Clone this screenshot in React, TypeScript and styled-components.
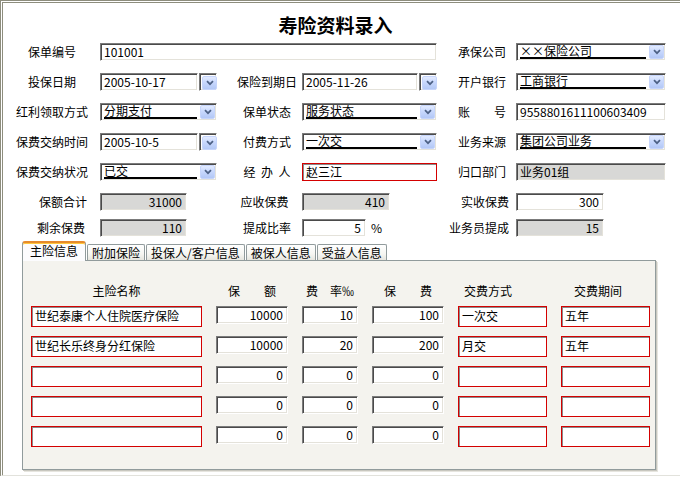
import React from 'react'
import styled, { createGlobalStyle, css } from 'styled-components'

const GlobalStyle = createGlobalStyle`
  html, body {
    margin: 0;
    padding: 0;
    background: #ffffff;
  }
  body {
    font-family: "Noto Sans CJK SC", "Noto Sans", sans-serif;
    font-size: 12px;
    color: #000000;
  }
  * {
    box-sizing: border-box;
  }
`

const sunken = css`
  border-top: 1px solid #7b7b7b;
  border-left: 1px solid #7b7b7b;
  border-bottom: 1px solid #ffffff;
  border-right: 1px solid #ffffff;
  box-shadow: inset 1px 1px 0 #4a4a4a, inset -1px -1px 0 #e4e2da;
`

const Frame = styled.div`
  width: 680px;
  height: 476px;
  border-top: 3px double #8d8d7d;
  border-left: 3px double #8d8d7d;
  border-bottom: 1px solid #e2e2dc;
  background: #ffffff;
  display: flex;
  flex-direction: column;
`

const Title = styled.h1`
  margin: 11px 12px 0 0;
  font-size: 19px;
  line-height: 22px;
  font-weight: 700;
  text-align: center;
`

const FormGrid = styled.div`
  display: grid;
  grid-template-columns: 90px 117px 85px 135px 79px 150px;
  grid-template-rows: 30px 30px 30px 30px 30px 26px 18px;
  align-items: start;
  margin: 7px 0 0 7px;
`

const Label = styled.div<{ $pad?: string; $align?: string; $spaced?: boolean }>`
  height: 18px;
  line-height: 18px;
  white-space: nowrap;
  text-align: ${({ $align }) => $align ?? 'center'};
  padding: ${({ $pad }) => $pad ?? '0'};
  ${({ $spaced }) =>
    $spaced &&
    css`
      letter-spacing: 5.5px;
      text-indent: 5.5px;
    `}
`

type Tone = 'white' | 'gray' | 'red'

const Field = styled.div<{ $w?: number; $tone?: Tone; $right?: boolean; $span?: number; $h?: number }>`
  ${sunken}
  width: ${({ $w }) => ($w ? `${$w}px` : '100%')};
  height: ${({ $h }) => $h ?? 18}px;
  line-height: ${({ $h }) => ($h ?? 18) - 3}px;
  padding: 0 4px 0 3px;
  white-space: nowrap;
  text-align: ${({ $right }) => ($right ? 'right' : 'left')};
  background: ${({ $tone }) => ($tone === 'gray' ? '#d8d8d6' : '#ffffff')};
  grid-column: ${({ $span }) => ($span ? `span ${$span}` : 'auto')};
  ${({ $tone }) =>
    $tone === 'red' &&
    css`
      border: 1px solid #d40000;
      box-shadow: inset 1px 1px 0 #8a8a8a;
    `}
`

const Inline = styled.div`
  display: flex;
  align-items: center;
`

const Unit = styled.span`
  margin-left: 5px;
  line-height: 18px;
`

const DateBox = styled.div`
  display: flex;
  gap: 1px;
  width: 100%;
  & > ${Field} {
    flex: 1;
  }
`

const Well = styled.div`
  ${sunken}
  width: 18px;
  height: 18px;
  padding: 1px 0 0 2px;
  background: #ffffff;
`

const Combo = styled.div`
  ${sunken}
  width: 100%;
  height: 18px;
  background: #ffffff;
  display: flex;
  align-items: flex-start;
  padding: 0 1px 0 3px;
`

const ComboValue = styled.div`
  flex: 1;
  height: 15px;
  line-height: 13px;
  border-bottom: 2px solid #000000;
  margin-right: 3px;
  white-space: nowrap;
`

const DropBtn = styled.span`
  width: 15px;
  height: 14px;
  margin-top: 1px;
  border-radius: 2px;
  border: 1px solid #c6d5fb;
  background: linear-gradient(180deg, #e3ebff 0%, #c8d8fd 45%, #b3c8f6 100%);
  display: flex;
  align-items: center;
  justify-content: center;
  flex: none;
`

const TabArea = styled.div`
  margin: 4px 0 0 19px;
  width: 634px;
`

const TabStrip = styled.div`
  display: flex;
  align-items: flex-end;
  height: 19px;
`

const Tab = styled.div<{ $active?: boolean }>`
  white-space: nowrap;
  border: 1px solid #919b9c;
  border-bottom: none;
  ${({ $active }) =>
    $active
      ? css`
          position: relative;
          z-index: 1;
          height: 20px;
          margin-bottom: -1px;
          padding: 0 7px;
          line-height: 16px;
          background: #fcfcfe;
          border-top: 2px solid #e68b2c;
          box-shadow: inset 0 1px 0 #ffc73c;
          border-radius: 3px 3px 0 0;
        `
      : css`
          height: 16px;
          margin-left: 1px;
          padding: 0 4px;
          line-height: 16px;
          background: linear-gradient(180deg, #ffffff 0%, #f6f6f2 60%, #e6e5de 100%);
          border-radius: 2px 2px 0 0;
        `}
`

const Panel = styled.div`
  height: 210px;
  border: 1px solid #919b9c;
  background: #f4f3ee;
  box-shadow: 1px 1px 0 #c8c7bf, 2px 2px 0 #e6e5df;
  padding: 22px 0 0 8px;
`

const TableGrid = styled.div`
  display: grid;
  grid-template-columns: 171px 72px 56px 72px 89px 89px;
  grid-template-rows: 23px repeat(5, 30px);
  column-gap: 14px;
  align-items: start;
`

const Head = styled.div<{ $padR?: number }>`
  height: 16px;
  line-height: 16px;
  text-align: center;
  white-space: nowrap;
  padding-right: ${({ $padR }) => $padR ?? 0}px;
`

function Chevron() {
  return (
    <svg width="8" height="6" viewBox="0 0 8 6">
      <path d="M1 1.2 L4 4.2 L7 1.2" fill="none" stroke="#4d6185" strokeWidth="1.7" />
    </svg>
  )
}

function Select({ value }: { value: string }) {
  return (
    <Combo>
      <ComboValue>{value}</ComboValue>
      <DropBtn>
        <Chevron />
      </DropBtn>
    </Combo>
  )
}

function DateInput({ value }: { value: string }) {
  return (
    <DateBox>
      <Field>{value}</Field>
      <Well>
        <DropBtn>
          <Chevron />
        </DropBtn>
      </Well>
    </DateBox>
  )
}

const tabs = ['主险信息', '附加保险', '投保人/客户信息', '被保人信息', '受益人信息']

const policies = [
  { name: '世纪泰康个人住院医疗保险', amount: '10000', rate: '10', fee: '100', mode: '一次交', term: '五年' },
  { name: '世纪长乐终身分红保险', amount: '10000', rate: '20', fee: '200', mode: '月交', term: '五年' },
  { name: '', amount: '0', rate: '0', fee: '0', mode: '', term: '' },
  { name: '', amount: '0', rate: '0', fee: '0', mode: '', term: '' },
  { name: '', amount: '0', rate: '0', fee: '0', mode: '', term: '' },
]

export default function App() {
  return (
    <>
      <GlobalStyle />
      <Frame>
        <Title>寿险资料录入</Title>
        <FormGrid>
          <Label $pad="0 6px 0 0">保单编号</Label>
          <Field $span={3}>101001</Field>
          <Label $pad="0 0 0 11px">承保公司</Label>
          <Select value="××保险公司" />

          <Label $pad="0 6px 0 0">投保日期</Label>
          <DateInput value="2005-10-17" />
          <Label $pad="0 0 0 15px">保险到期日</Label>
          <DateInput value="2005-11-26" />
          <Label $pad="0 0 0 11px">开户银行</Label>
          <Select value="工商银行" />

          <Label $pad="0 6px 0 0">红利领取方式</Label>
          <Select value="分期支付" />
          <Label $pad="0 0 0 15px">保单状态</Label>
          <Select value="服务状态" />
          <Label $pad="0 0 0 11px">账　　号</Label>
          <Field>9558801611100603409</Field>

          <Label $pad="0 6px 0 0">保费交纳时间</Label>
          <DateInput value="2005-10-5" />
          <Label $pad="0 0 0 15px">付费方式</Label>
          <Select value="一次交" />
          <Label $pad="0 0 0 11px">业务来源</Label>
          <Select value="集团公司业务" />

          <Label $pad="0 6px 0 0">保费交纳状况</Label>
          <Select value="已交" />
          <Label $pad="0 0 0 15px" $spaced>
            经办人
          </Label>
          <Field $tone="red">赵三江</Field>
          <Label $pad="0 0 0 11px">归口部门</Label>
          <Field $tone="gray">业务01组</Field>

          <Label $pad="0 13px 0 0" $align="right">
            保额合计
          </Label>
          <Field $w={87} $tone="gray" $right>
            31000
          </Field>
          <Label $pad="0 0 0 10px">应收保费</Label>
          <Field $w={88} $tone="gray" $right>
            410
          </Field>
          <Label $pad="0 7px 0 0" $align="right">
            实收保费
          </Label>
          <Field $w={88} $right>
            300
          </Field>

          <Label $pad="0 15px 0 0" $align="right">
            剩余保费
          </Label>
          <Field $w={87} $tone="gray" $right>
            110
          </Field>
          <Label $pad="0 0 0 15px">提成比率</Label>
          <Inline>
            <Field $w={64} $right>
              5
            </Field>
            <Unit>%</Unit>
          </Inline>
          <Label $pad="0 7px 0 0" $align="right">
            业务员提成
          </Label>
          <Field $w={88} $tone="gray" $right>
            15
          </Field>
        </FormGrid>

        <TabArea>
          <TabStrip>
            {tabs.map((t, i) => (
              <Tab key={t} $active={i === 0}>
                {t}
              </Tab>
            ))}
          </TabStrip>
          <Panel>
            <TableGrid>
              <Head>主险名称</Head>
              <Head>保　　额</Head>
              <Head>费　率‰</Head>
              <Head>保　　费</Head>
              <Head $padR={29}>交费方式</Head>
              <Head $padR={15}>交费期间</Head>
              {policies.map((p, i) => (
                <React.Fragment key={i}>
                  <Field $tone="red" $h={21}>
                    {p.name}
                  </Field>
                  <Field $right>{p.amount}</Field>
                  <Field $right>{p.rate}</Field>
                  <Field $right>{p.fee}</Field>
                  <Field $tone="red" $h={21}>
                    {p.mode}
                  </Field>
                  <Field $tone="red" $h={21}>
                    {p.term}
                  </Field>
                </React.Fragment>
              ))}
            </TableGrid>
          </Panel>
        </TabArea>
      </Frame>
    </>
  )
}
